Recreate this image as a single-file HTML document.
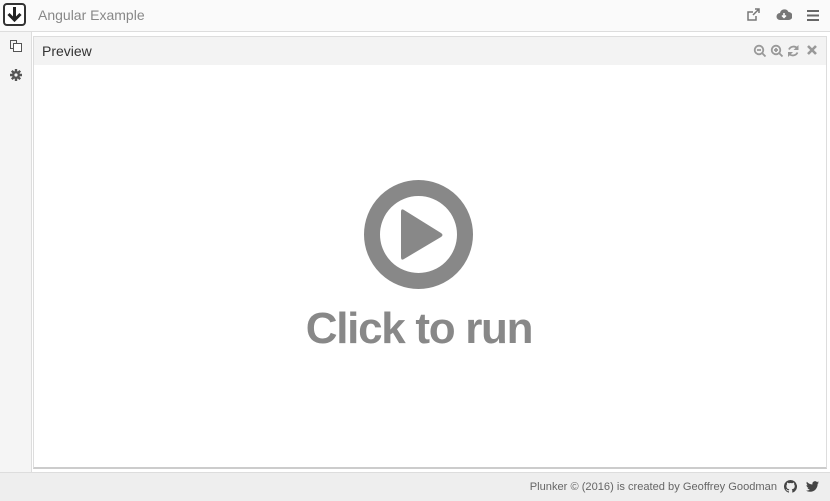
<!DOCTYPE html>
<html><head><style>
body{margin:0;width:830px;height:500px;position:relative;overflow:hidden;background:#fff;font-family:"Liberation Sans",Arial,sans-serif;}
.top{position:absolute;left:0;top:0;width:830px;height:31px;background:#fafafa;border-bottom:1px solid #ddd;}
.logo{position:absolute;left:3px;top:3px;width:23px;height:23px;border:2px solid #333;border-radius:4px;box-sizing:border-box;background:#fff;}
.title{position:absolute;left:38px;top:7px;font-size:14px;color:#888;}
.side{position:absolute;left:0;top:32px;width:31px;height:440px;background:#f5f5f5;border-right:1px solid #ddd;}
.panel{position:absolute;left:33px;top:36px;width:794px;height:433px;border:1px solid #ddd;border-bottom:2px solid #ccc;background:#fff;box-sizing:border-box;}
.ph{height:28px;background:#f3f3f3;}
.ph span{position:absolute;left:8px;top:6px;font-size:14px;color:#333;}
.foot{position:absolute;left:0;top:472px;width:830px;height:28px;background:#eee;border-top:1px solid #ddd;}
.foot span{position:absolute;right:53px;top:8px;font-size:11.1px;color:#666;}
.cr{position:absolute;left:4px;width:830px;text-align:center;top:304px;font-size:44px;font-weight:bold;color:#888;letter-spacing:-1.3px;}
</style></head><body>
<div class="top">
<div class="logo"><svg width="19" height="19" viewBox="0 0 19 19"><path d="M9.5 2v13M3.5 9l6 6 6-6" stroke="#222" stroke-width="3" fill="none"/></svg></div>
<div class="title">Angular Example</div>
<svg style="position:absolute;left:746px;top:8px" width="16" height="14" viewBox="0 0 16 14"><path d="M10 8v4H2V4h5" stroke="#777" stroke-width="1.5" fill="none"/><path d="M7 7l6-6M9 1h4v4" stroke="#777" stroke-width="1.5" fill="none"/></svg>
<svg style="position:absolute;left:776px;top:9px" width="16" height="12" viewBox="0 0 16 12"><path d="M4 11a3.5 3.5 0 010-7 4.5 4.5 0 018.5-1A3.5 3.5 0 0112.5 11z" fill="#777"/><path d="M8 4v4M6 6.5l2 2 2-2" stroke="#fff" stroke-width="1.5" fill="none"/></svg>
<svg style="position:absolute;left:807px;top:10px" width="12" height="11"><rect y="0" width="12" height="2" fill="#666"/><rect y="4.5" width="12" height="2" fill="#666"/><rect y="9" width="12" height="2" fill="#666"/></svg>
</div>
<div class="side">
<svg style="position:absolute;left:9px;top:7px" width="14" height="14" viewBox="0 0 14 14"><rect x="4.5" y="4.5" width="8" height="8" fill="#fff" stroke="#555"/><path d="M4.5 9.5h-3v-8h6v3" stroke="#555" fill="none"/></svg>
<svg style="position:absolute;left:10px;top:37px" width="12" height="12" viewBox="0 0 12 12"><circle cx="6" cy="6" r="4" fill="#555"/><path d="M6 0v12M0 6h12M1.8 1.8l8.4 8.4M10.2 1.8l-8.4 8.4" stroke="#555" stroke-width="2.4"/><circle cx="6" cy="6" r="1.6" fill="#f5f5f5"/></svg>
</div>
<div class="panel"><div class="ph"><span>Preview</span></div>
<svg style="position:absolute;left:719px;top:7px" width="70" height="14" viewBox="0 0 70 14">
<g stroke="#999" stroke-width="1.8" fill="none"><circle cx="6" cy="6" r="4.3"/><path d="M9 9l3.5 3.5M4 6h4"/>
<circle cx="23" cy="6" r="4.3"/><path d="M26 9l3.5 3.5M21 6h4M23 4v4"/>
<path d="M44.5 4.5a5 5 0 00-8.5 1M36 9.5a5 5 0 008.5-1"/></g>
<path d="M45.5 1v5h-5zM35 13V8h5z" fill="#999"/>
<path d="M55 2l8 8M63 2l-8 8" stroke="#999" stroke-width="2.6"/>
</svg>
</div>
<svg style="position:absolute;left:363px;top:179px" width="112" height="112" viewBox="0 0 112 112"><circle cx="55.5" cy="55.5" r="46.5" stroke="#888" stroke-width="16" fill="none"/><path d="M41 31q-3-2-3 2v45q0 4 3 2l37-22q3-2 0-4z" fill="#888"/></svg>
<div class="cr">Click to run</div>
<div class="foot"><span>Plunker © (2016) is created by Geoffrey Goodman</span>
<svg style="position:absolute;left:784px;top:7px" width="13" height="13" viewBox="0 0 16 16"><path fill="#444" d="M8 0a8 8 0 00-2.5 15.6c.4 0 .5-.2.5-.4v-1.5c-2.2.5-2.7-1-2.7-1-.4-.9-.9-1.2-.9-1.2-.7-.5.1-.5.1-.5.8.1 1.2.8 1.2.8.7 1.3 1.9.9 2.4.7 0-.5.3-.9.5-1.1-1.8-.2-3.6-.9-3.6-4 0-.9.3-1.6.8-2.1-.1-.2-.4-1 .1-2.1 0 0 .7-.2 2.2.8a7.500 7.500 0 014 0c1.5-1 2.2-.8 2.2-.8.4 1.1.2 1.900.1 2.100.5.6.8 1.3.8 2.1 0 3.100-1.900 3.800-3.600 4 .3.3.6.800.6 1.500v2.200c0 .2.100.5.600.4A8 8 0 008 0z"/></svg>
<svg style="position:absolute;left:806px;top:8px" width="13" height="11" viewBox="0 0 16 13"><path fill="#444" d="M16 1.5a6.600 6.600 0 01-1.900.5A3.300 3.300 0 0015.600.2a6.600 6.600 0 01-2.100.8A3.300 3.300 0 007.900 4 9.300 9.300 0 011.100.6a3.300 3.300 0 001 4.400 3.300 3.300 0 01-1.500-.4 3.300 3.300 0 002.600 3.200 3.300 3.300 0 01-1.500.1 3.300 3.300 0 003.100 2.300A6.600 6.600 0 010 11.500 9.300 9.300 0 005 13c6 0 9.300-5 9.300-9.300v-.4A6.700 6.700 0 0016 1.500z"/></svg>
</div>
</body></html>
